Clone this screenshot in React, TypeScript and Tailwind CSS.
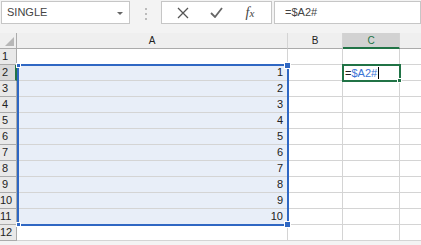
import React from 'react'

const font = { fontFamily: '"Liberation Sans", Arial, sans-serif' }

const ROWS = Array.from({ length: 12 }, (_, i) => i + 1)

function XIcon() {
  return (
    <svg width="12" height="12" viewBox="0 0 12 12">
      <path d="M1 1 L11 11 M11 1 L1 11" stroke="#555" strokeWidth="1.3" fill="none" />
    </svg>
  )
}

function CheckIcon() {
  return (
    <svg width="13" height="11" viewBox="0 0 13 11">
      <path d="M1 6 L5 10 L12 1" stroke="#666" strokeWidth="1.8" fill="none" />
    </svg>
  )
}

export default function App() {
  return (
    <div className="relative w-[421px] h-[245px] overflow-hidden bg-[#f3f3f3] text-[#222]" style={font}>
      {/* Toolbar */}
      <div className="flex h-[26px] items-start pt-[1px]">
        <div className="relative ml-[1px] flex h-[23px] w-[129px] items-center border border-[#c6c6c6] bg-white pl-[5px] text-[11px] text-[#444]">
          SINGLE
          <div className="absolute right-[6px] top-[10px] h-0 w-0 border-x-[3px] border-t-[3px] border-x-transparent border-t-[#666]" />
        </div>
        <div className="flex w-[31px] flex-col items-center gap-[3px] pt-[7px]">
          <div className="h-[2px] w-[2px] bg-[#bbb]" />
          <div className="h-[2px] w-[2px] bg-[#bbb]" />
          <div className="h-[2px] w-[2px] bg-[#bbb]" />
        </div>
        <div className="flex h-[23px] w-[111px] items-center border border-[#c6c6c6] bg-white">
          <div className="flex w-[37px] justify-center pl-[4px]">
            <XIcon />
          </div>
          <div className="flex w-[34px] justify-center">
            <CheckIcon />
          </div>
          <div
            className="flex w-[34px] items-baseline justify-center text-[14px] italic text-[#444]"
            style={{ fontFamily: '"Liberation Serif", serif' }}
          >
            f<span className="text-[11px]">x</span>
          </div>
        </div>
        <div className="ml-[2px] flex h-[23px] flex-1 items-center border border-[#c6c6c6] bg-white pl-[10px] text-[11px] text-[#444]">
          =$A2#
        </div>
      </div>

      {/* Sheet */}
      <div className="mt-[7px] grid grid-cols-[17px_271px_55px_57px_21px] bg-white text-[10px]">
        {/* header row */}
        <div className="relative h-[16px] border-b border-r border-[#ababab] bg-[#efefef]">
          <div className="absolute bottom-[2px] right-[2px] h-0 w-0 border-b-[9px] border-l-[9px] border-b-[#b7b7b7] border-l-transparent" />
        </div>
        <div className="flex h-[16px] items-center justify-center border-b border-r border-b-[#ababab] border-r-[#d4d4d4] bg-[#efefef]">A</div>
        <div className="flex h-[16px] items-center justify-center border-b border-r border-b-[#ababab] border-r-[#d4d4d4] bg-[#efefef]">B</div>
        <div className="flex h-[16px] items-center justify-center border-b-2 border-r border-b-[#217346] border-r-[#d4d4d4] bg-[#d2d2d2] pt-[1px] text-[#217346]">C</div>
        <div className="h-[16px] border-b border-[#ababab] bg-[#efefef]" />

        {ROWS.map((r) => {
          const inSel = r >= 2 && r <= 11
          return (
            <React.Fragment key={r}>
              <div
                className={`flex h-[16px] items-center border-b border-r border-[#ababab] ${
                  r === 2 ? 'border-r-2 border-r-[#217346] bg-[#d9d9d9]' : 'bg-[#e9e9e9]'
                }`}
              >
                <div className="w-[10px] text-center text-[11px]">{r}</div>
              </div>
              <div
                className={`flex h-[16px] items-center justify-end border-b border-r border-[#d4d4d4] pr-[4px] text-[11px] ${
                  inSel ? 'bg-[#e8eef8]' : ''
                }`}
              >
                {inSel ? r - 1 : ''}
              </div>
              <div className="h-[16px] border-b border-r border-[#d4d4d4]" />
              <div className="h-[16px] border-b border-r border-[#d4d4d4]" />
              <div className="h-[16px] border-b border-[#d4d4d4]" />
            </React.Fragment>
          )
        })}
      </div>

      {/* Selection of A2:A11 */}
      <div className="pointer-events-none absolute left-[17px] top-[64px] h-[162px] w-[272px] border-2 border-[#2f67c3]">
        <div className="absolute -left-[3px] -top-[3px] h-[5px] w-[5px] border border-white bg-[#2f67c3]" />
        <div className="absolute -right-[4px] -top-[4px] h-[7px] w-[7px] border border-white bg-[#2f67c3]" />
        <div className="absolute -bottom-[3px] -left-[3px] h-[5px] w-[5px] border border-white bg-[#2f67c3]" />
        <div className="absolute -bottom-[4px] -right-[4px] h-[7px] w-[7px] border border-white bg-[#2f67c3]" />
      </div>

      {/* Active cell C2 */}
      <div className="absolute left-[342px] top-[64px] flex h-[18px] w-[59px] items-center border-2 border-[#217346] bg-white pl-[1px] text-[11px]">
        <span>=</span>
        <span className="text-[#3b74d6]">$A2#</span>
        <span className="ml-[1px] h-[12px] w-px bg-black" />
        <div className="absolute -bottom-[3px] -right-[3px] h-[5px] w-[5px] border border-white bg-[#217346]" />
      </div>
    </div>
  )
}
